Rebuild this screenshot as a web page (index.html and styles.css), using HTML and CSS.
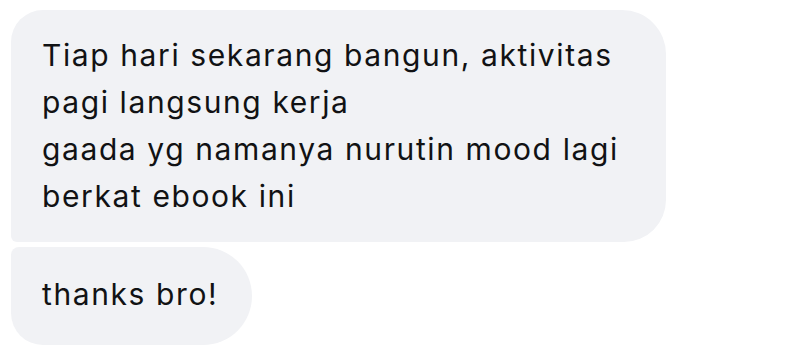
FILE: index.html
```html
<!DOCTYPE html>
<html>
<head>
<meta charset="utf-8">
<link rel="stylesheet" href="styles.css">
</head>
<body>
<div class="thread">
  <div class="bubble bubble-first">
    <p class="msg">Tiap hari sekarang bangun, aktivitas<br>pagi langsung kerja</p>
    <p class="msg">gaada yg namanya nurutin mood lagi<br>berkat ebook ini</p>
  </div>
  <div class="bubble bubble-last">
    <p class="msg">thanks bro!</p>
  </div>
</div>
</body>
</html>
```

FILE: styles.css
```css
html, body {
  margin: 0;
  padding: 0;
  background: #ffffff;
}
body {
  width: 800px;
  height: 362px;
  overflow: hidden;
  font-family: "Inter", "Liberation Sans", sans-serif;
  color: #111214;
}
.thread {
  display: flex;
  flex-direction: column;
  align-items: flex-start;
  gap: 5px;
  padding: 10px 0 0 11px;
}
.bubble {
  background: #f1f2f5;
  box-sizing: border-box;
}
.msg {
  margin: 0;
  font-size: 30px;
  line-height: 47px;
  letter-spacing: 1.6px;
}
.bubble-first {
  width: 655px;
  padding: 22px 20px 22px 31px;
  border-radius: 32px 44px 42px 6px;
}
.bubble-last {
  padding: 24px 34px 27px 31px;
  border-radius: 8px 49px 49px 32px;
}
```
